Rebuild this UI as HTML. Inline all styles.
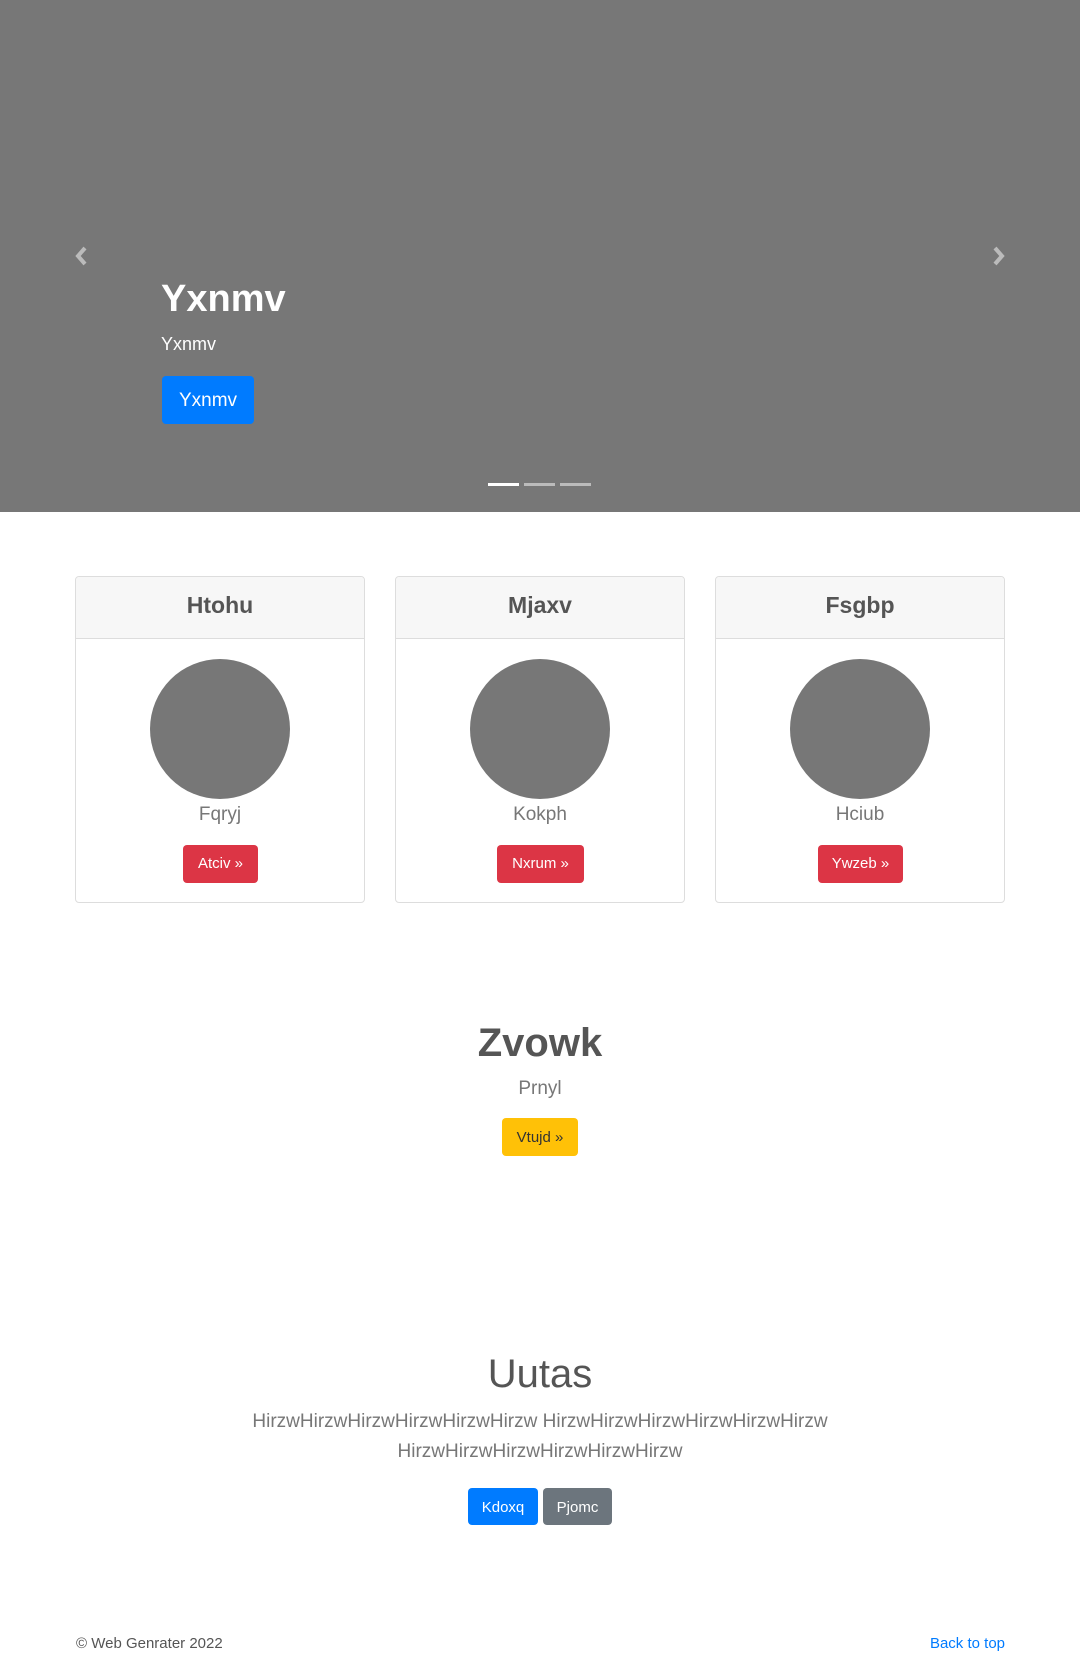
<!DOCTYPE html>
<html><head><meta charset="utf-8"><style>
*{box-sizing:border-box;margin:0;padding:0}
body{width:1080px;height:1654px;position:relative;font-family:"Liberation Sans",sans-serif;color:#555;background:#fff;overflow:hidden}
.a{position:absolute}
.hero{left:0;top:0;width:1080px;height:512px;background:#777}
.btn{position:absolute;border-radius:4px;color:#fff;text-align:center;font-size:15px}
.card{position:absolute;top:576px;width:290px;height:327px;border:1px solid #ddd;border-radius:4px;overflow:hidden}
.card .h{height:62px;background:#f7f7f7;border-bottom:1px solid #ddd;text-align:center;font-size:23px;font-weight:bold;line-height:56px;color:#555}
.card .c{position:absolute;left:74px;top:82px;width:140px;height:140px;border-radius:50%;background:#777}
.card .t{position:absolute;left:0;width:100%;top:227px;text-align:center;font-size:19px;color:#777}
.card .b{position:absolute;top:268px;height:38px;line-height:38px;background:#dc3545}
</style></head><body>
<div class="a hero"></div>
<svg class="a" style="left:74px;top:246px" width="14" height="20" viewBox="0 0 14 20"><path d="M11 2L4 10l7 8" fill="none" stroke="#bbb" stroke-width="4"/></svg>
<svg class="a" style="left:992px;top:246px" width="14" height="20" viewBox="0 0 14 20"><path d="M3 2l7 8-7 8" fill="none" stroke="#bbb" stroke-width="4"/></svg>
<div class="a" style="left:161px;top:278px;font-size:38px;font-weight:bold;color:#fff">Yxnmv</div>
<div class="a" style="left:161px;top:334px;font-size:18px;color:#fff">Yxnmv</div>
<div class="btn" style="left:162px;top:376px;width:92px;height:48px;line-height:50px;background:#007bff;font-size:19px">Yxnmv</div>
<div class="a" style="left:488px;top:483px;width:31px;height:3px;background:#fff"></div>
<div class="a" style="left:524px;top:483px;width:31px;height:3px;background:#bbb"></div>
<div class="a" style="left:560px;top:483px;width:31px;height:3px;background:#bbb"></div>

<div class="card" style="left:75px"><div class="h">Htohu</div><div class="c"></div><div class="t">Fqryj</div><div class="btn b" style="left:107px;width:75px">Atciv »</div></div>
<div class="card" style="left:395px"><div class="h">Mjaxv</div><div class="c"></div><div class="t">Kokph</div><div class="btn b" style="left:101px;width:87px">Nxrum »</div></div>
<div class="card" style="left:715px"><div class="h">Fsgbp</div><div class="c"></div><div class="t">Hciub</div><div class="btn b" style="left:102px;width:85px">Ywzeb »</div></div>

<div class="a" style="left:0;width:1080px;top:1021px;text-align:center;font-size:40px;font-weight:bold;color:#555">Zvowk</div>
<div class="a" style="left:0;width:1080px;top:1078px;text-align:center;font-size:19px;color:#777">Prnyl</div>
<div class="btn" style="left:502px;top:1118px;width:76px;height:38px;line-height:40px;background:#ffc107;color:#333">Vtujd »</div>

<div class="a" style="left:0;width:1080px;top:1352px;text-align:center;font-size:40px;color:#555">Uutas</div>
<div class="a" style="left:0;width:1080px;top:1407px;text-align:center;font-size:19px;line-height:30px;color:#777">HirzwHirzwHirzwHirzwHirzwHirzw HirzwHirzwHirzwHirzwHirzwHirzw<br>HirzwHirzwHirzwHirzwHirzwHirzw</div>
<div class="btn" style="left:468px;top:1488px;width:70px;height:37px;line-height:39px;background:#007bff">Kdoxq</div>
<div class="btn" style="left:543px;top:1488px;width:69px;height:37px;line-height:39px;background:#6c757d">Pjomc</div>

<div class="a" style="left:76px;top:1635px;font-size:15px;color:#555">© Web Genrater 2022</div>
<div class="a" style="right:75px;top:1635px;font-size:15px;color:#007bff">Back to top</div>
</body></html>
